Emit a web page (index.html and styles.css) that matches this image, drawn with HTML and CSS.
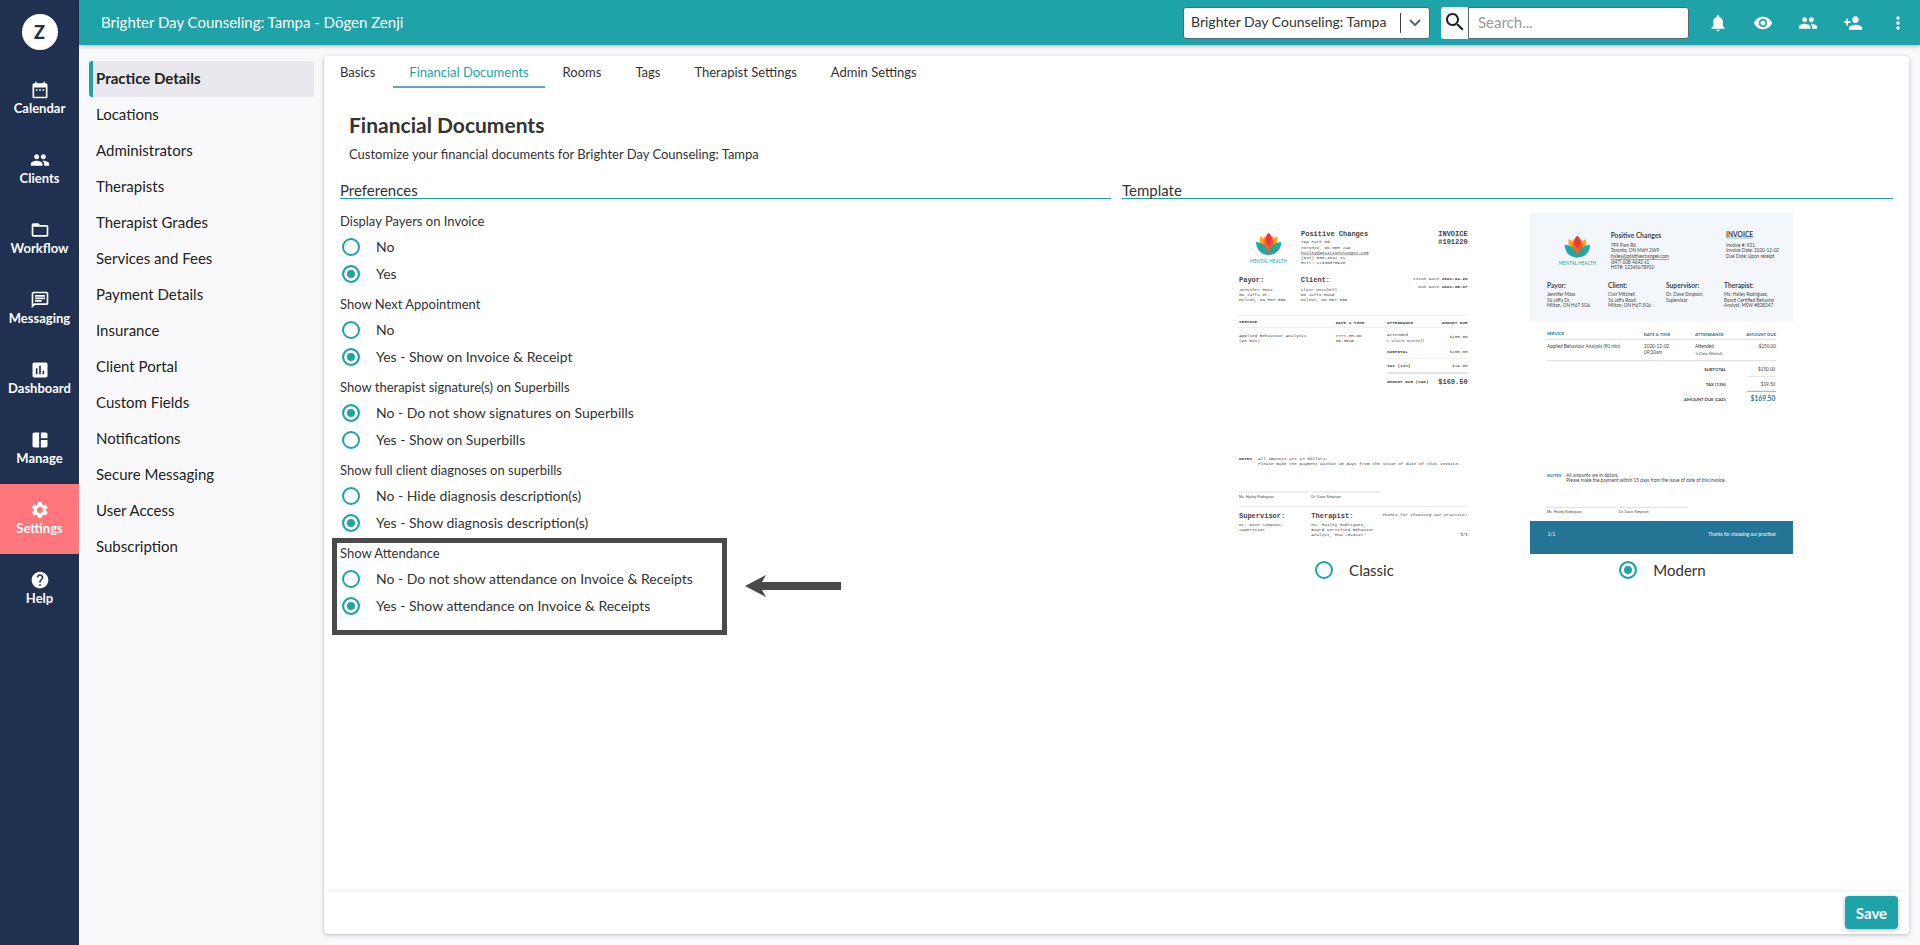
FILE: index.html
```html
<!DOCTYPE html>
<html lang="en">
<head>
<meta charset="UTF-8">
<title>Financial Documents</title>
<link rel="stylesheet" href="styles.css">
</head>
<body>
<svg class="defs" width="0" height="0" aria-hidden="true">
  <symbol id="people" viewBox="0 0 24 24"><path d="M16 11c1.700 0 3-1.300 3-3s-1.300-3-3-3-3 1.300-3 3 1.300 3 3 3zM8 11c1.700 0 3-1.300 3-3S9.700 5 8 5 5 6.300 5 8s1.300 3 3 3zm0 2c-2.300 0-7 1.200-7 3.500V19h14v-2.500C15 14.200 10.300 13 8 13zm8 0c-.3 0-.6 0-1 .1 1.200.8 2 2 2 3.400V19h6v-2.500c0-2.300-4.700-3.500-7-3.500z"/></symbol>
  <symbol id="lotus" viewBox="0 0 76 66">
    <path fill="#fba919" d="M12 10C9 34 16 52 38 64 42 40 32 18 12 10z"/>
    <path fill="#fba919" d="M64 10C67 34 60 52 38 64 34 40 44 18 64 10z"/>
    <path fill="#e8403a" d="M38 0C22 14 20 40 38 64 56 40 54 14 38 0z"/>
    <path fill="#f7702a" d="M26 9C18 30 22 50 38 64 42 44 38 22 26 9z" opacity=".8"/>
    <path fill="#fb5a2a" d="M50 9C58 30 54 50 38 64 34 44 38 22 50 9z" opacity=".8"/>
    <path fill="#e8383a" d="M38 0C29 9 27 20 32 30L38 38 44 30C49 20 47 9 38 0z"/>
    <path fill="#17a9bd" d="M0 27C20 28 37 44 38 66 15 65 1 50 0 27z"/>
    <path fill="#17a9bd" d="M76 27C56 28 39 44 38 66 61 65 75 50 76 27z"/>
    <path fill="#3c9f87" d="M13 31C28 36 37 48 38 66 22 60 13 48 13 31zM63 31C48 36 39 48 38 66 54 60 63 48 63 31z"/>
  </symbol>
</svg>

<div class="app">
  <nav class="rail">
    <a href="#" class="logo">Z</a>
    <a href="#"><svg viewBox="0 0 24 24"><path d="M19 4h-1V2h-2v2H8V2H6v2H5c-1.100 0-2 .9-2 2v14c0 1.100.9 2 2 2h14c1.100 0 2-.9 2-2V6c0-1.100-.9-2-2-2zm0 16H5V9h14v11zM7 11h2v2H7zM11 11h2v2h-2zM15 11h2v2h-2z"/></svg>Calendar</a>
    <a href="#"><svg><use href="#people"/></svg>Clients</a>
    <a href="#"><svg viewBox="0 0 24 24"><path d="M20 6h-8l-2-2H4c-1.100 0-2 .9-2 2v12c0 1.100.9 2 2 2h16c1.100 0 2-.9 2-2V8c0-1.100-.9-2-2-2zm0 12H4V8h16v10z"/></svg>Workflow</a>
    <a href="#"><svg viewBox="0 0 24 24"><path d="M4 4h16v12H5.200L4 17.200V4zm0-2c-1.100 0-2 .9-2 2v18l4-4h14c1.100 0 2-.9 2-2V4c0-1.100-.9-2-2-2H4zm2 10h8v2H6v-2zm0-3h12v2H6V9zm0-3h12v2H6V6z"/></svg>Messaging</a>
    <a href="#"><svg viewBox="0 0 24 24"><path d="M19 3H5c-1.100 0-2 .9-2 2v14c0 1.100.9 2 2 2h14c1.100 0 2-.9 2-2V5c0-1.100-.9-2-2-2zM9 17H7v-7h2v7zm4 0h-2V7h2v10zm4 0h-2v-4h2v4z"/></svg>Dashboard</a>
    <a href="#"><svg viewBox="0 0 24 24"><path d="M11 21H5c-1.100 0-2-.9-2-2V5c0-1.100.9-2 2-2h6v18zm2 0h6c1.100 0 2-.9 2-2v-7h-8v9zm8-11V5c0-1.100-.9-2-2-2h-6v7h8z"/></svg>Manage</a>
    <a href="#" class="on"><svg viewBox="0 0 24 24"><path d="M19.100 12.900c0-.3.100-.6.100-.9s0-.6-.1-.9l2-1.600c.2-.1.200-.4.100-.6l-1.900-3.300c-.1-.2-.4-.3-.6-.2l-2.400 1c-.5-.4-1-.7-1.600-.9l-.4-2.600c0-.2-.2-.4-.5-.4H9.900c-.2 0-.4.200-.5.400L9.100 5.400c-.6.200-1.100.6-1.600.9l-2.400-1c-.2-.1-.5 0-.6.200L2.600 8.900c-.1.200-.1.500.1.600l2 1.600c0 .3-.1.600-.1.900s0 .6.100.9l-2 1.600c-.2.100-.2.400-.1.600l1.900 3.300c.1.200.4.300.6.200l2.400-1c.5.400 1 .7 1.600.9l.4 2.600c0 .2.200.4.500.4h3.800c.2 0 .4-.2.500-.4l.4-2.600c.6-.2 1.100-.6 1.600-.9l2.400 1c.2.100.5 0 .6-.2l1.900-3.300c.1-.2.100-.5-.1-.6l-2-1.600zM12 15.600c-2 0-3.600-1.600-3.600-3.600S10 8.400 12 8.400s3.600 1.600 3.600 3.600-1.600 3.600-3.600 3.600z"/></svg>Settings</a>
    <a href="#"><svg viewBox="0 0 24 24"><path d="M12 2C6.500 2 2 6.500 2 12s4.500 10 10 10 10-4.500 10-10S17.500 2 12 2zm1 17h-2v-2h2v2zm2.100-7.800l-.9.900C13.400 12.900 13 13.500 13 15h-2v-.5c0-1.100.4-2.100 1.200-2.800l1.200-1.300c.4-.3.600-.8.600-1.400 0-1.100-.9-2-2-2s-2 .9-2 2H8c0-2.200 1.800-4 4-4s4 1.800 4 4c0 .9-.4 1.700-.9 2.200z"/></svg>Help</a>
  </nav>

  <div class="page">
    <header class="topbar">
      <div class="who">Brighter Day Counseling: Tampa - Dōgen Zenji</div>
      <div class="picker">
        <select aria-label="Practice"><option>Brighter Day Counseling: Tampa</option></select>
        <svg viewBox="0 0 20 20"><path d="M5 7l5 5 5-5" fill="none" stroke="#5c6670" stroke-width="2"/></svg>
      </div>
      <form class="search">
        <button type="button" aria-label="Search"><svg viewBox="0 0 24 24"><path d="M15.500 14h-.8l-.3-.3c1-1.100 1.600-2.600 1.600-4.200C16 5.900 13.100 3 9.500 3S3 5.900 3 9.500 5.900 16 9.500 16c1.600 0 3.100-.6 4.200-1.600l.3.300v.8l5 5 1.500-1.500-5-5zm-6 0C7 14 5 12 5 9.500S7 5 9.500 5 14 7 14 9.500 12 14 9.500 14z"/></svg></button>
        <input type="text" placeholder="Search..." aria-label="Search text">
      </form>
      <div class="actions">
        <button type="button" aria-label="Notifications"><svg viewBox="0 0 24 24"><path d="M12 22c1.100 0 2-.9 2-2h-4c0 1.100.9 2 2 2zm6-6v-5c0-3.100-1.600-5.600-4.500-6.300V4c0-.8-.7-1.500-1.500-1.500s-1.500.7-1.500 1.500v.7C7.600 5.400 6 7.900 6 11v5l-2 2v1h16v-1l-2-2z"/></svg></button>
        <button type="button" aria-label="View"><svg viewBox="0 0 24 24"><path d="M12 4.500C7 4.500 2.700 7.600 1 12c1.700 4.400 6 7.500 11 7.500s9.300-3.100 11-7.500c-1.700-4.400-6-7.500-11-7.500zM12 17c-2.800 0-5-2.200-5-5s2.200-5 5-5 5 2.200 5 5-2.200 5-5 5zm0-8c-1.700 0-3 1.300-3 3s1.300 3 3 3 3-1.300 3-3-1.300-3-3-3z"/></svg></button>
        <button type="button" aria-label="Clients"><svg><use href="#people"/></svg></button>
        <button type="button" aria-label="Add client"><svg viewBox="0 0 24 24"><path d="M15 12c2.200 0 4-1.800 4-4s-1.800-4-4-4-4 1.800-4 4 1.800 4 4 4zm-9-2V7H4v3H1v2h3v3h2v-3h3v-2H6zm9 4c-2.700 0-8 1.300-8 4v2h16v-2c0-2.700-5.300-4-8-4z"/></svg></button>
        <button type="button" aria-label="More"><svg viewBox="0 0 24 24"><path d="M12 8c1.100 0 2-.9 2-2s-.9-2-2-2-2 .9-2 2 .9 2 2 2zm0 2c-1.100 0-2 .9-2 2s.9 2 2 2 2-.9 2-2-.9-2-2-2zm0 6c-1.100 0-2 .9-2 2s.9 2 2 2 2-.9 2-2-.9-2-2-2z"/></svg></button>
      </div>
    </header>

    <div class="body">
      <nav class="menu">
        <a href="#" class="on">Practice Details</a>
        <a href="#">Locations</a>
        <a href="#">Administrators</a>
        <a href="#">Therapists</a>
        <a href="#">Therapist Grades</a>
        <a href="#">Services and Fees</a>
        <a href="#">Payment Details</a>
        <a href="#">Insurance</a>
        <a href="#">Client Portal</a>
        <a href="#">Custom Fields</a>
        <a href="#">Notifications</a>
        <a href="#">Secure Messaging</a>
        <a href="#">User Access</a>
        <a href="#">Subscription</a>
      </nav>

      <main class="card">
        <nav class="tabs">
          <a href="#">Basics</a>
          <a href="#" class="on">Financial Documents</a>
          <a href="#">Rooms</a>
          <a href="#">Tags</a>
          <a href="#">Therapist Settings</a>
          <a href="#">Admin Settings</a>
        </nav>
        <div class="intro">
          <h1>Financial Documents</h1>
          <p>Customize your financial documents for Brighter Day Counseling: Tampa</p>
        </div>

        <div class="cols">
          <section>
            <h2>Preferences</h2>
            <fieldset>
              <legend>Display Payers on Invoice</legend>
              <label><input type="radio" name="payers">No</label>
              <label><input type="radio" name="payers" checked>Yes</label>
            </fieldset>
            <fieldset>
              <legend>Show Next Appointment</legend>
              <label><input type="radio" name="next">No</label>
              <label><input type="radio" name="next" checked>Yes - Show on Invoice &amp; Receipt</label>
            </fieldset>
            <fieldset>
              <legend>Show therapist signature(s) on Superbills</legend>
              <label><input type="radio" name="sign" checked>No - Do not show signatures on Superbills</label>
              <label><input type="radio" name="sign">Yes - Show on Superbills</label>
            </fieldset>
            <fieldset>
              <legend>Show full client diagnoses on superbills</legend>
              <label><input type="radio" name="diag">No - Hide diagnosis description(s)</label>
              <label><input type="radio" name="diag" checked>Yes - Show diagnosis description(s)</label>
            </fieldset>
            <div class="marked">
              <fieldset>
                <legend>Show Attendance</legend>
                <label><input type="radio" name="attend">No - Do not show attendance on Invoice &amp; Receipts</label>
                <label><input type="radio" name="attend" checked>Yes - Show attendance on Invoice &amp; Receipts</label>
              </fieldset>
              <div class="frame"></div>
              <svg class="arrow" viewBox="0 0 96 22"><path d="M0 11L21 0l-4 7h79v8H17l4 7z"/></svg>
            </div>
          </section>

          <section>
            <h2>Template</h2>
            <div class="templates">
              <label>
                <svg class="doc classic" viewBox="0 0 789 1023">
                  <use href="#lotus" x="102" y="60" width="76" height="66"/>
                  <text class="brand" x="139" y="149" text-anchor="middle">MENTAL HEALTH</text>
                  <g class="big">
                    <text x="237" y="69">Positive Changes</text>
                    <text x="737" y="69" text-anchor="end">INVOICE</text>
                    <text x="737" y="92" text-anchor="end">#101220</text>
                    <text x="51" y="207">Payor:</text>
                    <text x="236" y="207">Client:</text>
                    <text x="737" y="513" text-anchor="end">$169.50</text>
                    <text x="51" y="916">Supervisor:</text>
                    <text x="268" y="916">Therapist:</text>
                  </g>
                  <text x="237" y="91">799 Park Rd.</text>
                  <text x="237" y="107">Toronto, ON M6H 2W9</text>
                  <text x="237" y="122" class="under">hailey@positivechanges.com</text>
                  <text x="237" y="138">(647) 608-4642 x1</text>
                  <text x="237" y="153">HST#: 12345678910</text>
                  <text x="51" y="233">Jennifer Moss</text>
                  <text x="51" y="248">56 Jaffa Dr.</text>
                  <text x="51" y="264">Milton, ON H6T 5G6</text>
                  <text x="236" y="233">Clair Mitchell</text>
                  <text x="236" y="248">56 Jaffa Road</text>
                  <text x="236" y="264">Milton, ON H6T 5G6</text>
                  <text x="737" y="200" text-anchor="end">Issue Date <tspan class="b">2022-04-26</tspan></text>
                  <text x="737" y="225" text-anchor="end">Due Date <tspan class="b">2022-05-07</tspan></text>
                  <path class="line" d="M51 307H738M51 343H738M495 436H738"/>
                  <path class="line thick" d="M495 480H738"/>
                  <g class="b">
                    <text x="51" y="329">SERVICE</text>
                    <text x="341" y="333">DATE &amp; TIME</text>
                    <text x="495" y="333">ATTENDANCE</text>
                    <text x="737" y="333" text-anchor="end">AMOUNT DUE</text>
                    <text x="495" y="419">SUBTOTAL</text>
                    <text x="495" y="461">TAX (13%)</text>
                    <text x="495" y="511">AMOUNT DUE (CAD)</text>
                    <text x="51" y="741">NOTES</text>
                  </g>
                  <text x="51" y="371">Applied Behaviour Analysis</text>
                  <text x="51" y="386">(90 min)</text>
                  <text x="341" y="371">YYYY-MM-DD</text>
                  <text x="341" y="386">09:30am</text>
                  <text x="495" y="370">Attended</text>
                  <text x="495" y="386" class="tiny">↳ Claire Mitchell</text>
                  <text x="737" y="375" text-anchor="end">$150.00</text>
                  <text x="737" y="419" text-anchor="end">$150.00</text>
                  <text x="737" y="461" text-anchor="end">$19.50</text>
                  <text x="108" y="741">All amounts are in dollars.</text>
                  <text x="108" y="756">Please make the payment within 15 days from the issue of date of this invoice.</text>
                  <path class="rule" d="M51 837H258M268 837H474"/>
                  <text class="sig" x="51" y="854">Ms. Hailey Rodriguez</text>
                  <text class="sig" x="268" y="854">Dr. Dave Simpson</text>
                  <path class="line" d="M51 880H738"/>
                  <text x="51" y="938">Dr. Dave Simpson,</text>
                  <text x="51" y="954">Supervisor</text>
                  <text x="268" y="938">Ms. Hailey Rodriguez,</text>
                  <text x="268" y="954">Board Certified Behavior</text>
                  <text x="268" y="970">Analyst, MSW #828247</text>
                  <text x="737" y="910" text-anchor="end" class="it">Thanks for choosing our practice!</text>
                  <text x="737" y="970" text-anchor="end" class="num">1/1</text>
                </svg>
                <span class="pick"><input type="radio" name="template">Classic</span>
              </label>

              <label>
                <svg class="doc modern" viewBox="0 0 789 1023">
                  <path fill="#f3f7fb" d="M0 0H789V326H0z"/>
                  <use href="#lotus" x="104" y="68" width="76" height="66"/>
                  <text class="brand" x="142" y="156" text-anchor="middle">MENTAL HEALTH</text>
                  <path fill="#c3dbe8" d="M588 69H670V78H588z"/>
                  <g class="big">
                    <text x="242" y="74">Positive Changes</text>
                    <text x="588" y="71">INVOICE</text>
                    <text x="51" y="225">Payor:</text>
                    <text x="234" y="225">Client:</text>
                    <text x="408" y="225">Supervisor:</text>
                    <text x="582" y="225">Therapist:</text>
                  </g>
                  <text x="242" y="101">799 Park Rd.</text>
                  <text x="242" y="118">Toronto, ON M6H 2W9</text>
                  <text x="242" y="135" class="under">hailey@positivechanges.com</text>
                  <text x="242" y="152">(647) 608-4642 x1</text>
                  <text x="242" y="168">HST#: 12345678910</text>
                  <text x="588" y="101">Invoice #: 921</text>
                  <text x="588" y="118">Invoice Date: 2020-12-02</text>
                  <text x="588" y="135">Due Date: Upon receipt</text>
                  <text x="51" y="249">Jennifer Moss</text>
                  <text x="51" y="266">56 Jaffa Dr.</text>
                  <text x="51" y="283">Milton, ON H6T 5G6</text>
                  <text x="234" y="249">Clair Mitchell</text>
                  <text x="234" y="266">56 Jaffa Road</text>
                  <text x="234" y="283">Milton, ON H6T 5G6</text>
                  <text x="408" y="249">Dr. Dave Simpson,</text>
                  <text x="408" y="266">Supervisor</text>
                  <text x="582" y="249">Ms. Hailey Rodriguez,</text>
                  <text x="582" y="266">Board Certified Behavior</text>
                  <text x="582" y="283">Analyst, MSW #828247</text>
                  <g class="head">
                    <text x="51" y="367">SERVICE</text>
                    <text x="341" y="368">DATE &amp; TIME</text>
                    <text x="495" y="368">ATTENDANCE</text>
                    <text x="738" y="368" text-anchor="end">AMOUNT DUE</text>
                    <text x="51" y="791">NOTES</text>
                  </g>
                  <path class="rule" d="M51 379H738M51 443H738M652 490H738"/>
                  <path class="rule dark" d="M652 535H738"/>
                  <text x="51" y="406">Applied Behaviour Analysis (90 min)</text>
                  <text x="342" y="406">2020-12-02</text>
                  <text x="342" y="423">09:30am</text>
                  <text x="495" y="406">Attended</text>
                  <text x="495" y="427" class="tiny">↳ Claire Mitchell</text>
                  <text x="738" y="406" text-anchor="end">$150.00</text>
                  <text x="588" y="473" text-anchor="end" class="b">SUBTOTAL</text>
                  <text x="736" y="473" text-anchor="end">$150.00</text>
                  <text x="588" y="518" text-anchor="end" class="b">TAX (13%)</text>
                  <text x="736" y="518" text-anchor="end">$19.50</text>
                  <text x="588" y="563" text-anchor="end" class="b">AMOUNT DUE (CAD)</text>
                  <text x="736" y="564" text-anchor="end" class="total">$169.50</text>
                  <text x="109" y="791">All amounts are in dollars.</text>
                  <text x="109" y="808">Please make the payment within 15 days from the issue of date of this invoice.</text>
                  <path class="rule" d="M51 883H258M267 883H473"/>
                  <text class="sig" x="51" y="900">Ms. Hailey Rodriguez</text>
                  <text class="sig" x="267" y="900">Dr. Dave Simpson</text>
                  <path fill="#247496" d="M0 924H789V1023H0z"/>
                  <text class="foot" x="53" y="968">1/1</text>
                  <text class="foot" x="738" y="968" text-anchor="end">Thanks for choosing our practice!</text>
                </svg>
                <span class="pick"><input type="radio" name="template" checked>Modern</span>
              </label>
            </div>
          </section>
        </div>

        <footer><button type="button" class="save">Save</button></footer>
      </main>
    </div>
  </div>
</div>
</body>
</html>
```
FILE: styles.css
```css
*{margin:0;padding:0;box-sizing:border-box;}
body{font:13px/20px Lato,"Liberation Sans",sans-serif;color:#333;background:#f9f9fb;}
a{color:inherit;text-decoration:none;}
button,input,select{font:inherit;}
.defs{position:absolute;}
.app{display:flex;min-height:100vh;}

/* left rail */
.rail{width:79px;flex:none;background:#1f3050;color:#fff;text-align:center;font-weight:bold;line-height:16px;}
.rail a{display:flex;flex-direction:column;align-items:center;height:70px;padding-top:16px;}
.rail svg{width:20px;height:20px;fill:#fff;}
.rail .on{background:#ff767c;}
.rail .logo{width:36px;height:36px;margin:14px auto;padding:0;justify-content:center;border-radius:50%;background:#fff;color:#1f3050;font-size:18px;font-weight:900;}

/* top bar */
.page{flex:1;min-width:0;display:flex;flex-direction:column;}
.topbar{display:flex;align-items:center;height:45px;padding-left:22px;background:#1ea3a8;box-shadow:0 1px 4px rgba(0,0,0,.3);}
.who{flex:1;padding-bottom:2px;color:#fff;font-size:15px;}
.picker{display:flex;align-items:center;width:247px;height:32px;border:1px solid #5c6670;border-radius:3px;background:#fff;}
.picker select{flex:1;height:20px;padding:0 0 2px 7px;border:0;border-right:1px solid #444;background:#fff;color:#333;font-size:14px;line-height:18px;appearance:none;outline:0;}
.picker svg{width:20px;height:20px;margin:0 4px;}
.search{display:flex;width:248px;height:32px;margin-left:11px;}
.search button{width:27px;border:0;border-radius:3px 0 0 3px;background:#f9f9fb;}
.search button svg{width:24px;height:24px;margin:3px 1px 0;fill:#222;}
.search input{flex:1;min-width:0;padding:0 0 2px 9px;border:1px solid #5c6670;border-radius:0 3px 3px 0;background:#fff;font-size:15px;}
.search input::placeholder{color:#999;}
.actions{display:flex;padding-left:6px;}
.actions button{width:45px;height:45px;border:0;background:none;}
.actions svg{width:20px;height:20px;fill:#fff;vertical-align:middle;}

/* settings menu */
.body{flex:1;display:flex;padding:11px 11px 11px 10px;}
.menu{width:225px;flex:none;margin:5px 10px 0 0;color:#222;font-size:15px;}
.menu a{display:block;height:36px;padding-left:3px;border-left:4px solid transparent;line-height:34px;}
.menu .on{border-left-color:#1ea3a8;border-radius:3px;background:#e8e8ec;font-weight:bold;}

/* content card */
.card{flex:1;min-width:0;display:flex;flex-direction:column;background:#fff;border-radius:4px;box-shadow:0 1px 4px rgba(0,0,0,.25);}
.tabs{display:flex;gap:2px;}
.tabs a{height:32px;padding:0 16px;line-height:32px;}
.tabs .on{color:#1ea3a8;border-bottom:2px solid #5fa3c0;}
.intro{padding:24px 25px 19px;}
h1{font-size:21px;line-height:26px;font-weight:bold;}
.intro p{margin-top:6px;}
.cols{flex:1;display:grid;grid-template-columns:1fr 1fr;gap:11px;padding:0 16px;}
h2{height:16px;margin-bottom:12px;border-bottom:1px solid #1ea3a8;font-size:15px;font-weight:normal;line-height:15px;}
fieldset{height:83px;border:0;}
legend{height:22px;line-height:20px;}
fieldset label{display:flex;align-items:center;height:27px;font-size:14px;}
input[type=radio]{flex:none;width:18px;height:18px;margin:0 16px 0 2px;border:2px solid #1ea3a8;border-radius:50%;background:#fff;appearance:none;}
input[type=radio]:checked{background:#1ea3a8;box-shadow:inset 0 0 0 3px #fff;}

/* callout over the attendance options */
.marked{position:relative;}
.frame{position:absolute;left:-8px;top:-5px;width:395px;height:97px;border:5px solid #4a4a4a;}
.arrow{position:absolute;left:405px;top:32px;width:96px;height:22px;fill:#4a4a4a;}

/* invoice templates */
.templates{display:flex;justify-content:center;gap:45px;padding-top:2px;}
.doc{display:block;width:263px;height:341px;}
.pick{display:flex;align-items:center;justify-content:center;height:32px;font-size:15px;}
.doc text{fill:#444;}
.doc .line{fill:none;stroke:#e4e4e4;stroke-width:2;}
.doc .thick{stroke-width:6;}
.doc .rule{fill:none;stroke:#ccc;stroke-width:2;}
.doc .dark{stroke:#777;}
.doc .b{font-weight:bold;}
.doc .it{font-style:italic;}
.doc .under{text-decoration:underline;}
.classic{font:13px "Liberation Mono",monospace;}
.modern{font:14px Lato,sans-serif;}
.classic .big{font-size:21px;font-weight:bold;}
.modern .big{font-size:20px;font-weight:bold;}
.doc .brand{fill:#1ea3a8;font:14px Lato,sans-serif;}
.doc .sig{font:11px "Liberation Sans",sans-serif;}
.doc .num{font:bold 13px Lato,sans-serif;}
.doc .tiny{font-size:11px;}
.modern .b{font-size:13px;}
.modern .head text{fill:#247496;font-size:13px;font-weight:bold;}
.modern .total{fill:#247496;font-size:20px;font-weight:bold;}
.modern .foot{fill:#fff;}

footer{display:flex;justify-content:flex-end;padding:5px 11px;border-top:1px solid #f3f3f5;}
.save{width:53px;height:33px;border:0;border-radius:4px;background:#1ea3a8;color:#fff;font-size:15px;font-weight:bold;box-shadow:0 1px 4px rgba(0,0,0,.3);}
```
